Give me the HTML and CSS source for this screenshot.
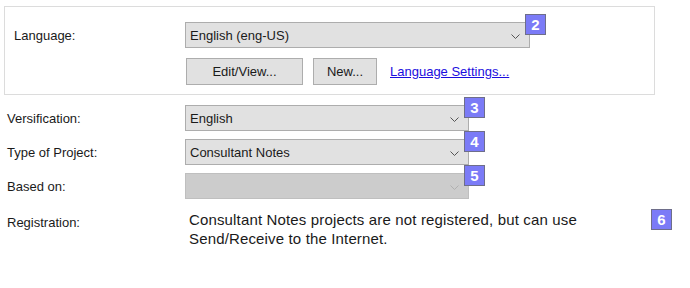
FILE: index.html
```html
<!DOCTYPE html>
<html lang="en">
<head>
  <meta charset="UTF-8" />
  <title>Project Properties</title>
  <link rel="stylesheet" href="styles.css">
</head>
<body>
  <div class="page">
    <!-- Language group -->
    <div class="group">
      <div class="row">
        <span class="label group-label">Language:</span>
        <div class="combo-wrap">
          <div class="combo wide">
            <span>English (eng-US)</span>
            <svg class="chevron" width="9" height="5" viewBox="0 0 9 5"><polyline points="0.5,0.5 4.5,4.5 8.5,0.5" fill="none" stroke="#555" stroke-width="1"/></svg>
          </div>
          <span class="badge">2</span>
        </div>
      </div>
      <div class="buttons">
        <button class="btn edit">Edit/View...</button>
        <button class="btn new">New...</button>
        <a href="#" class="link">Language Settings...</a>
      </div>
    </div>

    <div class="fields">
      <div class="row">
        <span class="label">Versification:</span>
        <div class="combo-wrap">
          <div class="combo">
            <span>English</span>
            <svg class="chevron" width="9" height="5" viewBox="0 0 9 5"><polyline points="0.5,0.5 4.5,4.5 8.5,0.5" fill="none" stroke="#555" stroke-width="1"/></svg>
          </div>
          <span class="badge">3</span>
        </div>
      </div>
      <div class="row">
        <span class="label">Type of Project:</span>
        <div class="combo-wrap">
          <div class="combo">
            <span>Consultant Notes</span>
            <svg class="chevron" width="9" height="5" viewBox="0 0 9 5"><polyline points="0.5,0.5 4.5,4.5 8.5,0.5" fill="none" stroke="#555" stroke-width="1"/></svg>
          </div>
          <span class="badge">4</span>
        </div>
      </div>
      <div class="row">
        <span class="label">Based on:</span>
        <div class="combo-wrap">
          <div class="combo disabled">
            <span></span>
            <svg class="chevron" width="9" height="5" viewBox="0 0 9 5"><polyline points="0.5,0.5 4.5,4.5 8.5,0.5" fill="none" stroke="#b0b0b0" stroke-width="1"/></svg>
          </div>
          <span class="badge">5</span>
        </div>
      </div>
      <div class="row registration">
        <span class="label">Registration:</span>
        <p class="reg-text">Consultant Notes projects are not registered, but can use<br>Send/Receive to the Internet.</p>
        <span class="badge reg-badge">6</span>
      </div>
    </div>
  </div>
</body>
</html>
```

FILE: styles.css
```css
body {
  margin: 0;
  font-family: "Liberation Sans", Arial, sans-serif;
  font-size: 13px;
  color: #1a1a1a;
  background: #fff;
}

.page {
  width: 690px;
  height: 288px;
}

.group {
  box-sizing: border-box;
  width: 651px;
  height: 89px;
  margin: 6px 0 0 4px;
  padding: 15px 0 0 9px;
  border: 1px solid #dcdcdc;
}

.row {
  display: flex;
  align-items: center;
}

.label {
  width: 178px;
  flex-shrink: 0;
}

.group-label {
  width: 171px;
}

.combo-wrap {
  position: relative;
}

.combo {
  box-sizing: border-box;
  width: 284px;
  height: 26px;
  display: flex;
  align-items: center;
  justify-content: space-between;
  padding: 0 9px 0 4px;
  background: #e1e1e1;
  border: 1px solid #adadad;
}

.combo.wide {
  width: 345px;
}

.combo.disabled {
  background: #cccccc;
  border-color: #bfbfbf;
}

.chevron {
  margin-top: 3px;
}

.badge {
  position: absolute;
  top: -8px;
  right: -16px;
  box-sizing: border-box;
  width: 21px;
  height: 21px;
  background: #7b7bf7;
  border: 1px solid #6e6e8a;
  color: #fff;
  font-weight: bold;
  font-size: 15px;
  line-height: 19px;
  text-align: center;
}

.buttons {
  display: flex;
  align-items: center;
  margin: 10px 0 0 171px;
}

.btn {
  box-sizing: border-box;
  height: 27px;
  margin: 0 10px 0 1px;
  padding: 0;
  font-family: "Liberation Sans", Arial, sans-serif;
  font-size: 13px;
  color: #1a1a1a;
  background: #e1e1e1;
  border: 1px solid #adadad;
}

.edit {
  width: 117px;
}

.new {
  width: 64px;
  margin-left: 0;
}

.link {
  margin-left: 3px;
  color: #1a0dde;
  text-decoration: underline;
}

.fields {
  display: flex;
  flex-direction: column;
  gap: 8px;
  margin-top: 10px;
  padding-left: 7px;
}

.registration {
  position: relative;
  align-items: flex-start;
  margin-top: 3px;
}

.registration .label {
  margin-top: 5px;
}

.reg-text {
  margin: 0 0 0 4px;
  font-size: 15px;
  line-height: 19px;
  letter-spacing: 0.15px;
}

.reg-badge {
  top: -1px;
  left: 644px;
  right: auto;
}
```
